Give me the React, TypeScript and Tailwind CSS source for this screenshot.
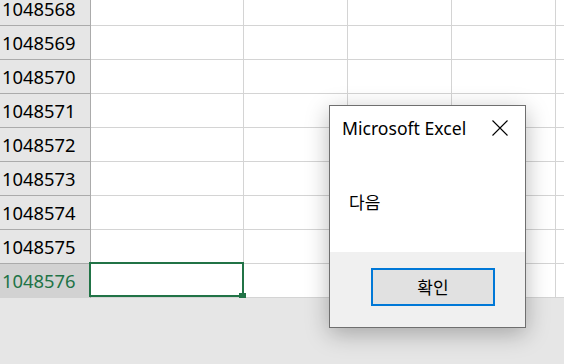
const rows = [1048568, 1048569, 1048570, 1048571, 1048572, 1048573, 1048574, 1048575, 1048576];

function Row({ n, selected }: { n: number; selected: boolean }) {
  return (
    <div className="flex h-[34px]">
      <div
        className={`w-[91px] shrink-0 flex items-center pl-[2px] border-r border-[#ababab] text-[18.4px] ${
          selected ? "bg-[#d2d2d2] text-[#217346]" : "bg-[#e6e6e6] text-black border-b"
        }`}
      >
        {n}
      </div>
      <div className="w-[153px] shrink-0 relative border-r border-b border-[#d4d4d4]">
        {selected && (
          <>
            <div className="absolute -left-[2px] -top-[2px] -right-[1px] bottom-0 border-2 border-[#217346]" />
            <div className="absolute -right-[3px] -bottom-[3px] w-[7px] h-[7px] bg-[#217346]" />
          </>
        )}
      </div>
      <div className="w-[104px] shrink-0 border-r border-b border-[#d4d4d4]" />
      <div className="w-[104px] shrink-0 border-r border-b border-[#d4d4d4]" />
      <div className="w-[104px] shrink-0 border-r border-b border-[#d4d4d4]" />
      <div className="flex-1 border-b border-[#d4d4d4]" />
    </div>
  );
}

export default function App() {
  return (
    <div className="relative w-[564px] h-[364px] overflow-hidden bg-[#e6e6e6] font-['Noto_Sans','Noto_Sans_CJK_KR',sans-serif]">
      <div className="h-[298px] overflow-hidden bg-white">
        <div className="-mt-[8px]">
          {rows.map((n) => (
            <Row key={n} n={n} selected={n === 1048576} />
          ))}
        </div>
      </div>

      <div className="absolute left-[329px] top-[105px] w-[197px] h-[223px] border border-[#6f6f6f] bg-white flex flex-col shadow-[0_6px_22px_rgba(0,0,0,0.28)]">
        <div className="h-[44px] flex items-center pl-[12px] pr-[17px]">
          <span className="text-[17.6px] text-black font-['Noto_Sans',sans-serif]">Microsoft Excel</span>
          <svg className="ml-auto" width="16" height="16" viewBox="0 0 16 16" fill="none">
            <path d="M0.5 0.5L15.5 15.5M15.5 0.5L0.5 15.5" stroke="#000" strokeWidth="1.1" />
          </svg>
        </div>
        <div className="flex-1">
          <div className="mt-[40px] pl-[19px] h-[24px] flex items-center text-[17px] text-black font-['Noto_Sans_CJK_KR',sans-serif]">
            다음
          </div>
        </div>
        <div className="h-[75px] bg-[#f0f0f0] pt-[16px] pl-[41px]">
          <button className="w-[124px] h-[38px] border-2 border-[#0078d7] bg-[#e1e1e1] flex items-center justify-center text-[17px] text-black font-['Noto_Sans_CJK_KR',sans-serif]">
            확인
          </button>
        </div>
      </div>
    </div>
  );
}
